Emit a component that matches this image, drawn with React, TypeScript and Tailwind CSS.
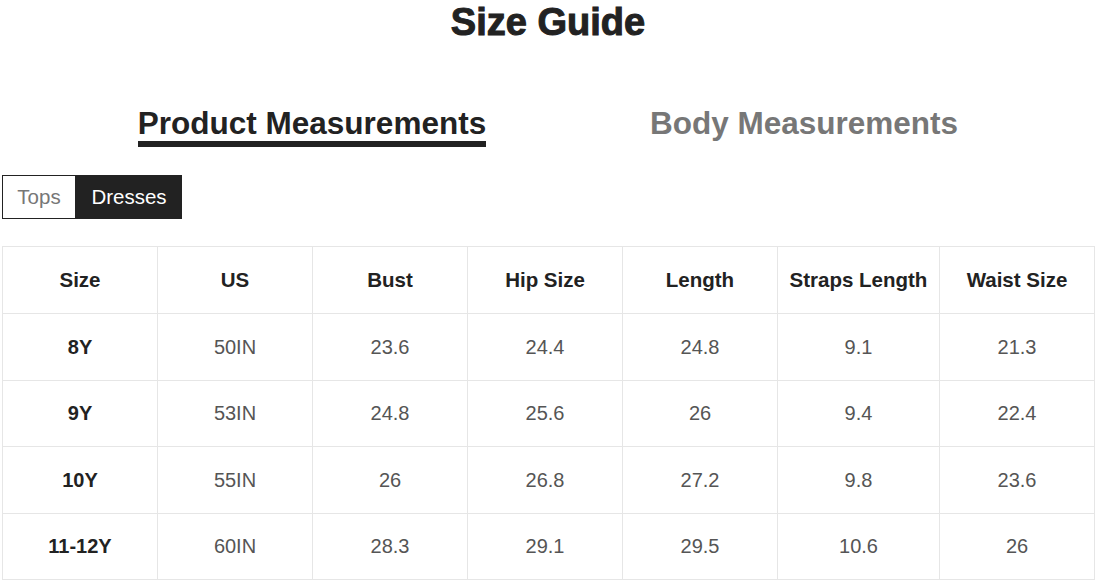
import * as React from "react";

const headers = ["Size", "US", "Bust", "Hip Size", "Length", "Straps Length", "Waist Size"];
const widths = ["w-[155px]", "w-[155px]", "w-[155px]", "w-[155px]", "w-[155px]", "w-[162px]", "w-[155px]"];

const rows = [
    ["8Y", "50IN", "23.6", "24.4", "24.8", "9.1", "21.3"],
    ["9Y", "53IN", "24.8", "25.6", "26", "9.4", "22.4"],
    ["10Y", "55IN", "26", "26.8", "27.2", "9.8", "23.6"],
    ["11-12Y", "60IN", "28.3", "29.1", "29.5", "10.6", "26"],
];

export default function App() {
    return (
        <div className="w-[1096px] h-[582px] bg-white overflow-hidden font-['Liberation_Sans',Arial,sans-serif]">
            <h1 className="text-center text-[38px] leading-[44px] font-bold text-[#222] [-webkit-text-stroke:1px_#222]">
                Size Guide
            </h1>

            {/* measurement tabs */}
            <div className="flex pl-[66px] pr-[46px] mt-[61px]">
                <div className="flex-1 flex justify-center">
                    <div className="border-b-[6px] border-[#222] pt-[1px]">
                        <span className="block text-[31.5px] leading-[35px] font-bold text-[#222]">Product Measurements</span>
                    </div>
                </div>
                <div className="flex-1 flex justify-center">
                    <span className="block pt-[1px] text-[31.5px] leading-[35px] font-bold text-[#777]">Body Measurements</span>
                </div>
            </div>

            <div className="flex mt-[28px] ml-[2px]">
                <button className="h-[44px] w-[74px] border border-[#222] text-[20.5px] text-[#777] bg-white">Tops</button>
                <button className="h-[44px] w-[106px] bg-[#222] text-[20.5px] text-white">Dresses</button>
            </div>

            <table className="ml-[2px] mt-[27px] border-collapse table-fixed w-[1092px]">
                <thead>
                    <tr className="h-[67px]">
                        {headers.map((h, i) => (
                            <th
                                key={h}
                                className={`${widths[i]} border border-[#e6e6e6] text-[20.5px] font-bold text-[#222] text-center`}
                            >
                                {h}
                            </th>
                        ))}
                    </tr>
                </thead>
                <tbody>
                    {rows.map((r) => (
                        <tr key={r[0]} className="h-[66.5px]">
                            {r.map((c, i) => (
                                <td
                                    key={i}
                                    className={
                                        i === 0
                                            ? "border border-[#e6e6e6] text-center text-[20px] font-bold text-[#222]"
                                            : "border border-[#e6e6e6] text-center text-[20px] text-[#555]"
                                    }
                                >
                                    {c}
                                </td>
                            ))}
                        </tr>
                    ))}
                </tbody>
            </table>
        </div>
    );
}
